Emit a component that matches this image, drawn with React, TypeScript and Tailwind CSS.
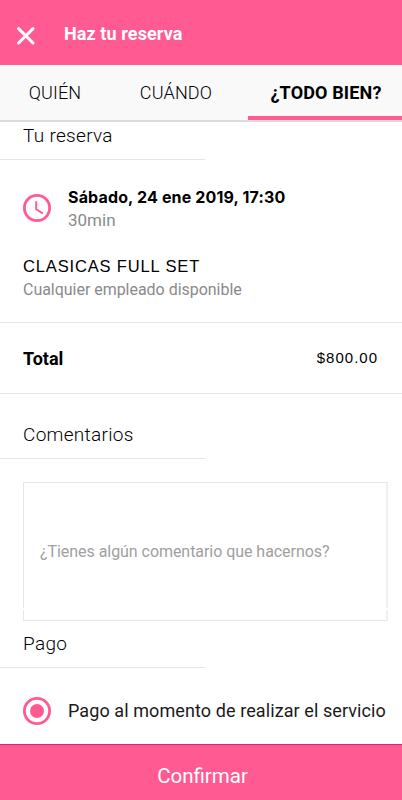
import { useState } from "react";

const tabs = [
  { label: "QUIÉN", className: "w-[110px] font-light" },
  { label: "CUÁNDO", className: "w-[138px] pr-[6px] font-light" },
  { label: "¿TODO BIEN?", className: "w-[154px] pl-[2px] font-bold" },
];

function SectionTitle({ children, className }: { children: string; className: string }) {
  return (
    <h2
      className={`w-[205px] shrink-0 border-b border-[#e6e6ea] pl-[23px] text-[19px] leading-6 tracking-[0.3px] font-light text-black ${className}`}
    >
      {children}
    </h2>
  );
}

export default function App() {
  const [active, setActive] = useState(2);
  const [comment, setComment] = useState("");

  return (
    <div className="flex h-[800px] w-[402px] flex-col overflow-hidden bg-white font-[Roboto,sans-serif] text-black">
      {/* Header */}
      <header className="flex h-[65px] shrink-0 items-center bg-[#ff5a92] pl-[17px] text-white">
        <button aria-label="Cerrar" className="mt-[6px]">
          <svg width="18" height="18" viewBox="0 0 18 18" fill="none">
            <path d="M1.6 1.6 16 16M16 1.6 1.6 16" stroke="currentColor" strokeWidth="3" strokeLinecap="round" />
          </svg>
        </button>
        <h1 className="ml-[29px] mt-[2px] text-[18px] leading-6 tracking-[0.1px] font-bold">Haz tu reserva</h1>
      </header>

      {/* Tabs */}
      <nav className="flex h-[57px] shrink-0 border-b-2 border-[#dcdcdc] bg-[#f9f9f9]">
        {tabs.map((tab, i) => (
          <button
            key={tab.label}
            onClick={() => setActive(i)}
            className={`h-[55px] border-b-4 pt-[4px] text-[18px] tracking-[0.15px] whitespace-nowrap ${tab.className} ${
              active === i ? "border-[#ff5a92]" : "border-transparent"
            }`}
          >
            {tab.label}
          </button>
        ))}
      </nav>

      <main className="flex h-[622px] shrink-0 flex-col">
        <SectionTitle className="h-[38px] pt-[2px]">Tu reserva</SectionTitle>

        <div className="mt-[25px] flex items-center pl-[23px]">
          <svg width="28" height="28" viewBox="0 0 28 28" fill="none" stroke="#ff5a92">
            <circle cx="14" cy="14" r="12.6" strokeWidth="2.8" />
            <path d="M13.2 7.3v8l6.6 4" strokeWidth="2" />
          </svg>
          <div className="ml-[17px]">
            <p className="font-[Inter,sans-serif] text-[16px] leading-6 tracking-[0.15px] font-bold">
              Sábado, 24 ene 2019, 17:30
            </p>
            <p className="text-[17px] leading-[22px] font-normal text-[#8a8a8a]">30min</p>
          </div>
        </div>

        <div className="mt-[23px] h-[68px] pl-[23px]">
          <p className="font-['Liberation_Sans',sans-serif] text-[16.5px] leading-6 tracking-[0.85px]">
            CLASICAS FULL SET
          </p>
          <p className="text-[16px] leading-[23px] tracking-[-0.03px] font-normal text-[#8a8a8a]">
            Cualquier empleado disponible
          </p>
        </div>

        <div className="flex h-[72px] shrink-0 items-center justify-between border-y border-[#e8e8ea] pr-[24px] pl-[23px]">
          <span className="text-[18px] font-bold">Total</span>
          <span className="font-['Liberation_Sans',sans-serif] text-[15px] tracking-[1px]">$800.00</span>
        </div>

        <SectionTitle className="mt-[25px] h-[40px] pt-[4px]">Comentarios</SectionTitle>

        {/* Comment box */}
        <div className="relative mt-[23px] mr-[14px] ml-[23px] flex h-[139px] shrink-0 items-center border border-r-2 border-[#e6e6ea] border-r-[#f0f0f3] pl-4">
          <input
            value={comment}
            onChange={(e) => setComment(e.target.value)}
            placeholder="¿Tienes algún comentario que hacernos?"
            className="w-full text-[16px] tracking-[-0.05px] font-normal placeholder:text-[#a0a0a0] outline-none"
          />
          <span className="absolute -right-0.5 -left-px bottom-[10px] h-0.5 bg-white" />
        </div>

        <SectionTitle className="mt-[9px] h-[38px] pt-[2px]">Pago</SectionTitle>

        <label className="mt-[29px] flex items-center pl-[23px]">
          <svg width="28" height="28" viewBox="0 0 28 28" fill="none">
            <circle cx="14" cy="14" r="12.6" stroke="#ff5a92" strokeWidth="2.8" />
            <circle cx="14" cy="14" r="7" fill="#ff5a92" />
          </svg>
          <span className="ml-[17px] text-[18px] leading-6 tracking-[0.09px] font-normal whitespace-nowrap text-[#1a1a1a]">
            Pago al momento de realizar el servicio
          </span>
        </label>
      </main>

      <button className="h-[56px] shrink-0 border-t border-[#f0147d] bg-[#ff5a92] pt-[7px] pl-[3px] text-[20.5px] text-white">
        Confirmar
      </button>
    </div>
  );
}
